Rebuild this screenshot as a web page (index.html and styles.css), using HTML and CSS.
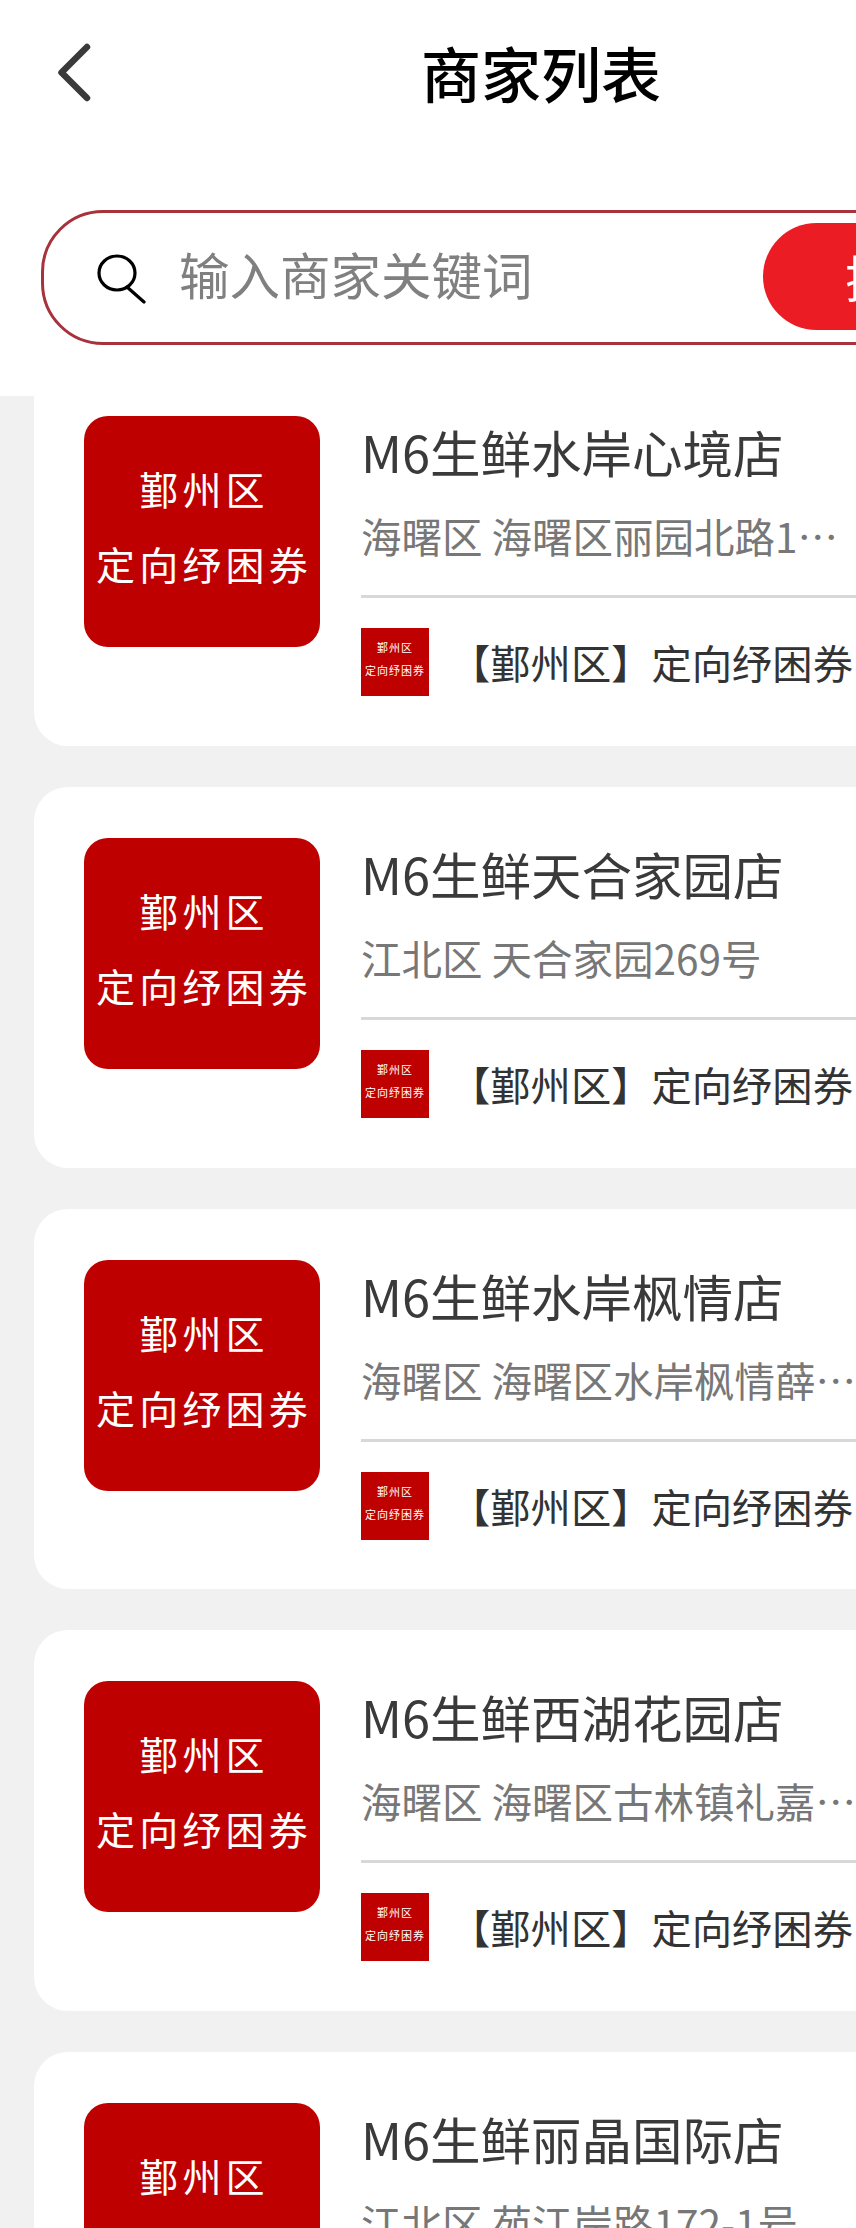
FILE: index.html
```html
<!DOCTYPE html>
<html lang="zh-CN">
<head>
<meta charset="utf-8">
<title>商家列表</title>
<link rel="stylesheet" href="styles.css">
</head>
<body>
<div class="page">
  <header class="top">
    <div class="nav">
      <svg class="back" width="44" height="68" viewBox="0 0 44 68"><path d="M35 9 L9.5 34.5 L35 60"/></svg>
      <h1 class="title">商家列表</h1>
      <span></span>
    </div>
    <div class="search">
      <svg class="search-icon" width="50" height="50" viewBox="0 0 50 50"><ellipse cx="20" cy="19" rx="18" ry="17"/><path d="M30 33 L47 48"/></svg>
      <span class="placeholder">输入商家关键词</span>
      <span class="search-btn">搜索</span>
    </div>
  </header>
  <main class="list">
    <div class="cards">
      <article class="card">
        <div class="cover"><span>鄞州区</span><span>定向纾困券</span></div>
        <div class="info">
          <div class="name">M6生鲜水岸心境店</div>
          <div class="addr">海曙区 海曙区丽园北路168号</div>
          <div class="coupon"><div class="thumb"><span>鄞州区</span><span>定向纾困券</span></div><span class="coupon-name">【鄞州区】定向纾困券</span></div>
        </div>
      </article>
      <article class="card">
        <div class="cover"><span>鄞州区</span><span>定向纾困券</span></div>
        <div class="info">
          <div class="name">M6生鲜天合家园店</div>
          <div class="addr">江北区 天合家园269号</div>
          <div class="coupon"><div class="thumb"><span>鄞州区</span><span>定向纾困券</span></div><span class="coupon-name">【鄞州区】定向纾困券</span></div>
        </div>
      </article>
      <article class="card">
        <div class="cover"><span>鄞州区</span><span>定向纾困券</span></div>
        <div class="info">
          <div class="name">M6生鲜水岸枫情店</div>
          <div class="addr">海曙区 海曙区水岸枫情薛家南路</div>
          <div class="coupon"><div class="thumb"><span>鄞州区</span><span>定向纾困券</span></div><span class="coupon-name">【鄞州区】定向纾困券</span></div>
        </div>
      </article>
      <article class="card">
        <div class="cover"><span>鄞州区</span><span>定向纾困券</span></div>
        <div class="info">
          <div class="name">M6生鲜西湖花园店</div>
          <div class="addr">海曙区 海曙区古林镇礼嘉桥村</div>
          <div class="coupon"><div class="thumb"><span>鄞州区</span><span>定向纾困券</span></div><span class="coupon-name">【鄞州区】定向纾困券</span></div>
        </div>
      </article>
      <article class="card">
        <div class="cover"><span>鄞州区</span><span>定向纾困券</span></div>
        <div class="info">
          <div class="name">M6生鲜丽晶国际店</div>
          <div class="addr">江北区 苑江岸路172-1号</div>
          <div class="coupon"><div class="thumb"><span>鄞州区</span><span>定向纾困券</span></div><span class="coupon-name">【鄞州区】定向纾困券</span></div>
        </div>
      </article>
    </div>
  </main>
</div>
</body>
</html>
```

FILE: styles.css
```css
* { box-sizing: border-box; }
html, body { margin: 0; height: 2228px; overflow: hidden; background: #f1f1f1; }
body { font-family: "Noto Sans CJK SC", "Noto Sans", sans-serif; }

.page { width: 1082px; }

.top { height: 396px; background: #fff; }
.nav {
  height: 143px;
  display: grid;
  grid-template-columns: 1fr auto 1fr;
  align-items: center;
  padding: 0 52px;
}
.back { display: block; fill: none; stroke: #3a3a3a; stroke-width: 6.5; stroke-linecap: round; stroke-linejoin: round; }
.title { margin: 0; font-size: 60px; font-weight: 500; line-height: 80px; color: #000; }

.search {
  height: 135px;
  margin: 67px 42px 0 41px;
  border: 3px solid #a8323c;
  border-radius: 62px;
  display: flex;
  align-items: center;
  padding: 0 10px 0 53px;
  background: #fff;
}
.search-icon { display: block; flex: none; fill: none; stroke: #000; stroke-width: 3.2; stroke-linecap: round; margin-top: 2px; }
.placeholder { margin-left: 32px; padding-bottom: 9px; font-size: 50.5px; line-height: 60px; color: #808080; }
.search-btn {
  margin: 0 0 2px auto;
  width: 264px;
  height: 107px;
  border-radius: 54px;
  background: #ec1c24;
  color: #fff;
  font-size: 50px;
  line-height: 107px;
  text-align: center;
}

.list { height: 1832px; overflow: hidden; }
.cards { margin-top: -31px; display: flex; flex-direction: column; gap: 41px; padding-left: 34px; }
.card {
  flex: none;
  width: 1014px;
  height: 380.75px;
  background: #fff;
  border-radius: 34px;
  padding: 51px 0 0 50px;
  display: flex;
  gap: 41px;
}
.cover, .thumb {
  flex: none;
  background: #bf0000;
  color: #fff;
  font-family: "Liberation Serif", "Noto Sans CJK SC", serif;
  display: flex;
  flex-direction: column;
  align-items: center;
  justify-content: center;
}
.cover { width: 236px; height: 231px; border-radius: 24px; font-size: 39px; letter-spacing: 4.2px; line-height: 75px; padding: 0 0 5px 4px; }
.info { flex: 1; min-width: 0; }
.name { font-size: 50.5px; line-height: 64px; color: #3a3a3a; margin-top: 3px; white-space: nowrap; }
.addr {
  width: 496px;
  margin-top: 27px;
  font-size: 40.5px;
  line-height: 52px;
  color: #777;
  white-space: nowrap;
  overflow: hidden;
  text-overflow: ellipsis;
}
.coupon {
  margin-top: 33px;
  border-top: 3px solid #d8d8d8;
  padding-top: 30px;
  display: flex;
  align-items: center;
  gap: 21px;
}
.thumb { width: 68px; height: 68px; font-size: 11px; line-height: 23px; letter-spacing: 1px; padding-bottom: 4px; }
.coupon-name { font-size: 40.3px; line-height: 68px; color: #333; white-space: nowrap; }
```
